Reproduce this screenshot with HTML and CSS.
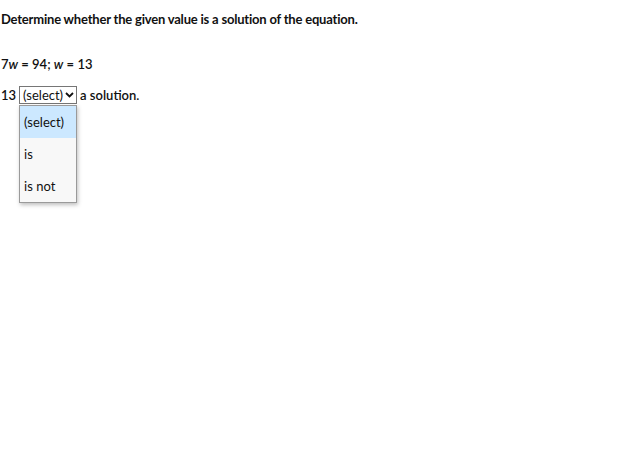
FILE: index.html
```html
<!DOCTYPE html>
<html>
<head>
<meta charset="utf-8">
<link rel="stylesheet" href="styles.css">
</head>
<body>
<div class="page">
  <p class="prompt">Determine whether the given value is a solution of the equation.</p>
  <p class="equation">7<i>w</i> = 94; <i>w</i> = 13</p>
  <div class="answer">
    <span>13</span>
    <div class="select-wrap">
      <div class="select"><span>(select)</span><svg class="chev" width="9" height="6" viewBox="0 0 9 6"><path d="M1 1 L4.5 4.5 L8 1" fill="none" stroke="#111" stroke-width="1.8"/></svg></div>
      <div class="menu">
        <div class="opt active">(select)</div>
        <div class="opt">is</div>
        <div class="opt">is not</div>
      </div>
    </div>
    <span>a solution.</span>
  </div>
</div>
</body>
</html>
```
FILE: styles.css
```css
html, body { margin: 0; padding: 0; background: #fff; min-height: 100vh; }
body { font-family: Lato, "Open Sans", sans-serif; color: #111; font-size: 13px; }
.page { padding: 11px 1px; min-height: 420px; }
.prompt { margin: 0; font-weight: 700; letter-spacing: -0.2px; line-height: 16px; }
.equation { margin: 29px 0 0; font-weight: 600; line-height: 16px; }
.equation i { font-style: italic; }
.answer { margin-top: 14px; display: flex; align-items: center; gap: 3px; font-weight: 600; line-height: 16px; }
.select-wrap { position: relative; }
.select { display: flex; align-items: center; justify-content: space-between; box-sizing: border-box; width: 58px; height: 18px; border: 1px solid #767676; padding: 0 2px 0 3px; font-weight: 400; }
.chev { display: block; }
.menu { position: absolute; left: 0; top: 19px; width: 58px; box-sizing: border-box; border: 1px solid #9a9a9a; background: #f8f8f8; box-shadow: 1px 2px 4px rgba(0,0,0,0.25); font-weight: 400; z-index: 2; }
.opt { display: block; height: 32px; line-height: 32px; padding-left: 4px; }
.opt.active { background: #cce8ff; }
```
